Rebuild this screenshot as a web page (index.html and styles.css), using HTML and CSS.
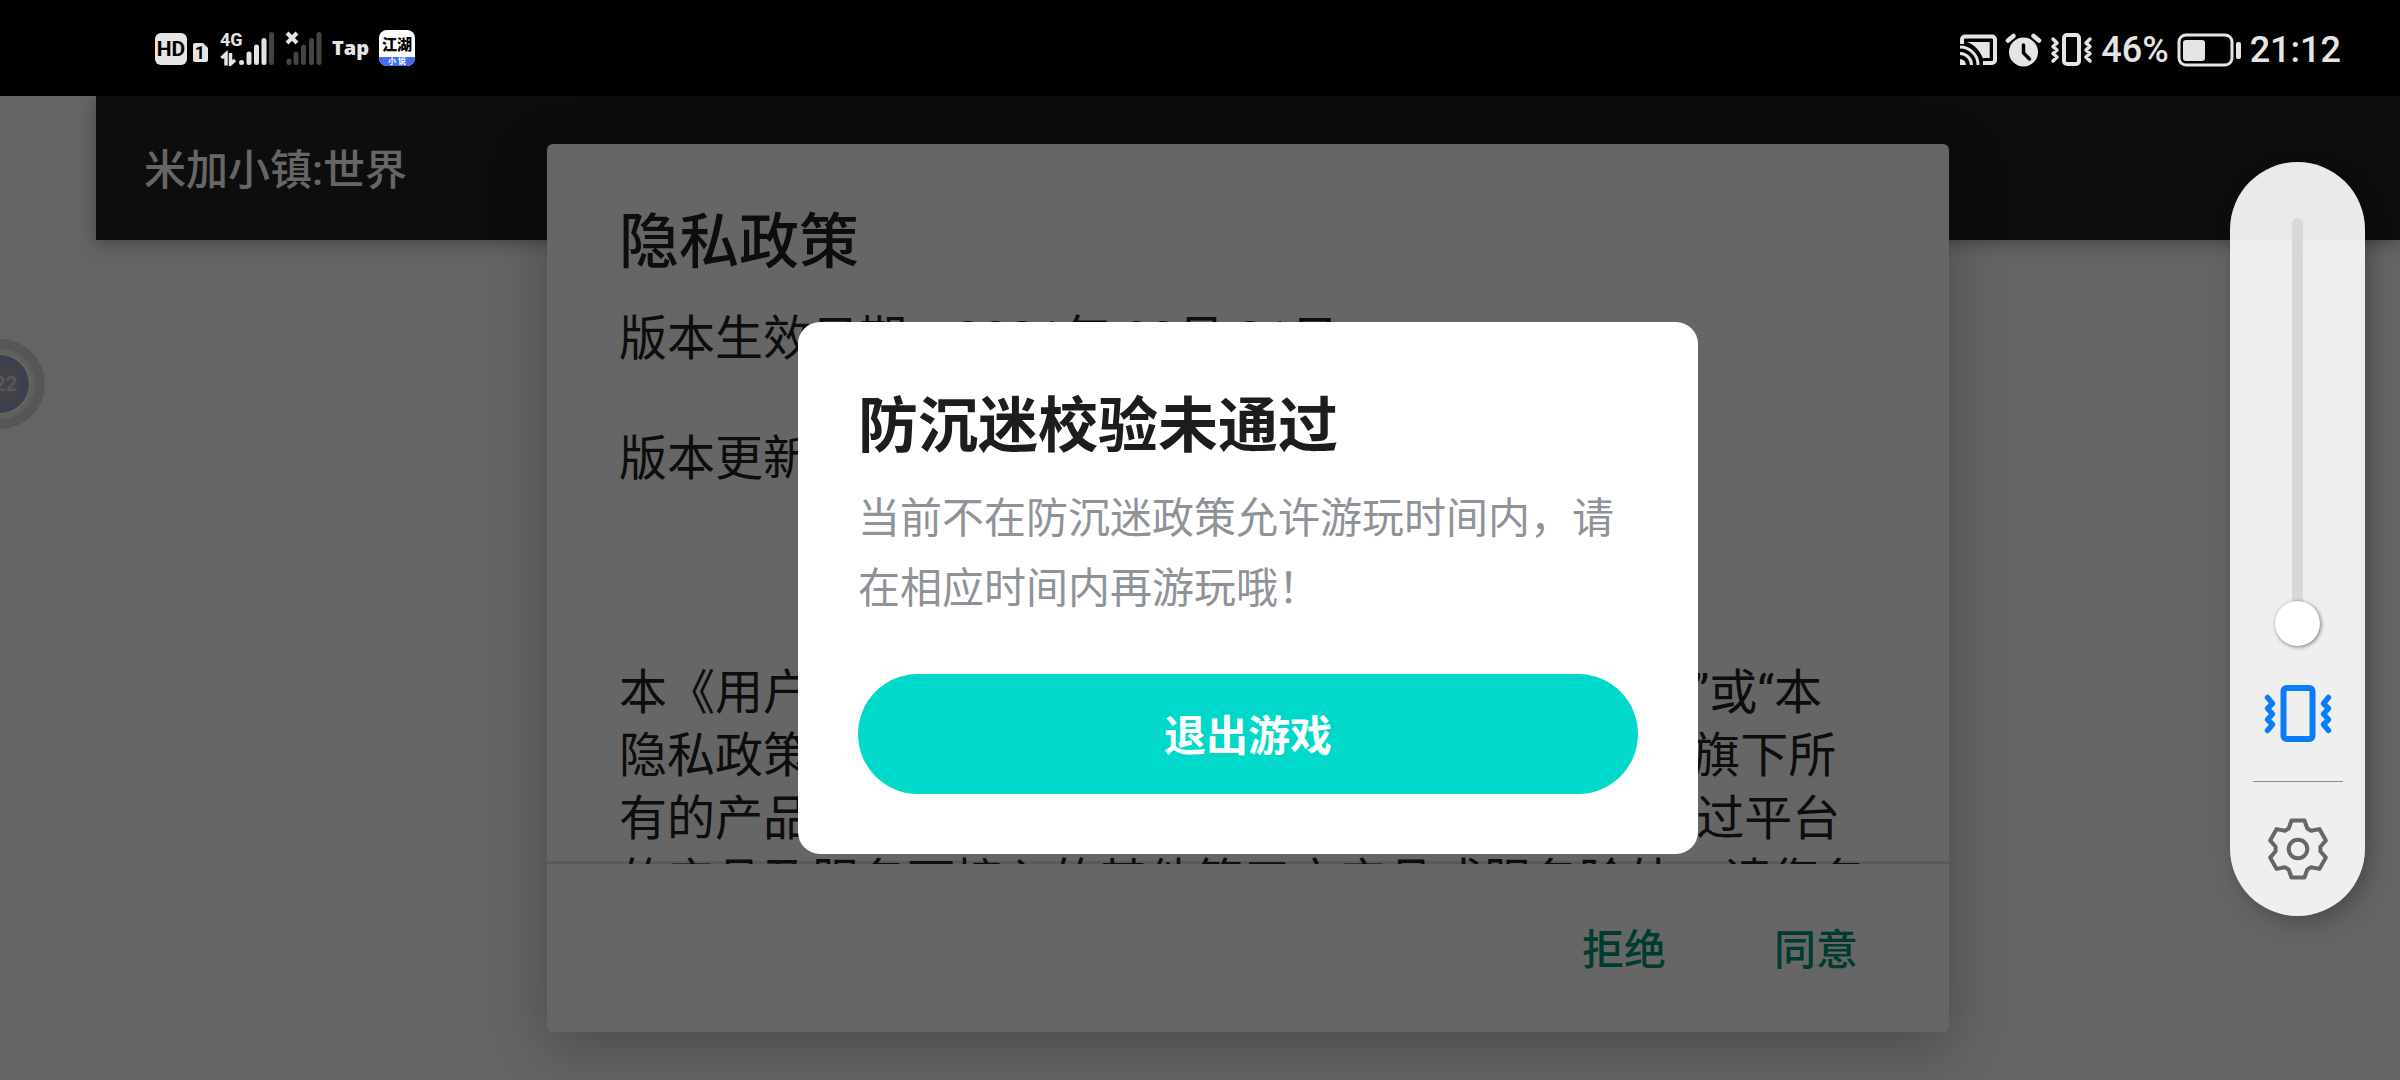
FILE: index.html
```html
<!DOCTYPE html>
<html lang="zh-CN">
<head>
    <meta charset="UTF-8">
    <meta name="viewport" content="width=device-width, initial-scale=1.0">
    <title>米加小镇:世界</title>
    <link rel="stylesheet" href="styles.css">
</head>
<body>

    <!-- 状态栏 -->
    <header class="status-bar">
        <div class="status-group">
            <svg width="53" height="36" viewBox="0 0 53 36">
                <rect x="0" y="3" width="32" height="32" rx="6" fill="#e5e5e5"/>
                <text class="hd-text" x="16" y="26" text-anchor="middle">HD</text>
                <path d="M40 13h8l5 5v12a2 2 0 0 1-2 2H40a2 2 0 0 1-2-2V15a2 2 0 0 1 2-2z" fill="#e5e5e5"/>
                <text class="sim-text" x="45" y="29" text-anchor="middle">1</text>
            </svg>
            <svg width="57" height="36" viewBox="-2 0 57 36">
                <text class="net-text" x="0" y="16">4G</text>
                <path d="M1.500 28L6 24V35.500M10.500 23v11L15 30" fill="none" stroke="#e5e5e5" stroke-width="3.500"/>
                <g stroke="#e5e5e5" stroke-width="5" stroke-linecap="round">
                    <path d="M21.500 32.500v.1M29 24v8.500M36.500 17v15.500M44 10.500v22"/>
                    <path d="M51.500 4.500v28" stroke="#444"/>
                </g>
            </svg>
            <svg width="37" height="36" viewBox="0 0 37 36">
                <path d="M2 3l10 10M12 3L2 13" stroke="#e5e5e5" stroke-width="4"/>
                <path d="M4 31v1.500M11 24v8.500M18.500 17v15.500M26.500 10.500v22M34 4.500v28" stroke="#444" stroke-width="5" stroke-linecap="round"/>
            </svg>
            <span class="tap">Tap</span>
            <svg width="36" height="36" viewBox="0 0 36 36">
                <rect width="36" height="36" rx="8" fill="#fff"/>
                <path d="M0 27h36v1a8 8 0 0 1-8 8H8a8 8 0 0 1-8-8z" fill="#3f6ff0"/>
                <text class="app-name" x="18" y="20" text-anchor="middle">江湖</text>
                <text class="app-kind" x="18" y="34" text-anchor="middle">小 说</text>
            </svg>
        </div>
        <div class="status-group status-right">
            <svg width="38" height="34" viewBox="0 0 38 34">
                <path d="M3 11V6.500a3 3 0 0 1 3-3h27a3 3 0 0 1 3 3V27a3 3 0 0 1-3 3h-9" fill="none" stroke="#e5e5e5" stroke-width="4"/>
                <path d="M8 9h22.700v16h-7C21 18 16 12 8 9z" fill="#e5e5e5"/>
                <path d="M1 26a6 6 0 0 1 6 6H1z" fill="#e5e5e5"/>
                <path d="M1 20.500A11.500 11.500 0 0 1 12.500 32M1 14a18 18 0 0 1 18 18" fill="none" stroke="#e5e5e5" stroke-width="3"/>
            </svg>
            <svg width="37" height="34" viewBox="0 0 37 34">
                <circle cx="18.500" cy="19" r="14.500" fill="#e5e5e5"/>
                <path d="M3 7.500L8.500 3M34 7.500L28.500 3" stroke="#e5e5e5" stroke-width="4.500" stroke-linecap="round"/>
                <path d="M18.500 12v8l6 6" fill="none" stroke="#000" stroke-width="3.500" stroke-linecap="round" stroke-linejoin="round"/>
            </svg>
            <svg width="43" height="34" viewBox="0 0 43 34">
                <rect x="14" y="2" width="15" height="29" rx="3" fill="none" stroke="#e5e5e5" stroke-width="4"/>
                <path d="M3 6l4 4-4 3.500 4 3.500-4 3.500 4 3.500-4 4M40 6l-4 4 4 3.500-4 3.500 4 3.500-4 3.500 4 4" fill="none" stroke="#e5e5e5" stroke-width="3.500" stroke-linecap="round" stroke-linejoin="round"/>
            </svg>
            <span class="status-text">46%</span>
            <svg width="65" height="34" viewBox="1 0 65 34">
                <rect x="3" y="2" width="53" height="30" rx="7" fill="none" stroke="#e5e5e5" stroke-width="3"/>
                <rect x="7" y="7" width="22" height="21" rx="3" fill="#e5e5e5"/>
                <rect x="60" y="9" width="5" height="17" rx="2" fill="#e5e5e5"/>
            </svg>
            <span class="status-text">21:12</span>
        </div>
    </header>

    <main class="screen">
        <div class="app-bar">
            <h1>米加小镇:世界</h1>
        </div>

        <!-- 悬浮球 -->
        <button class="float-ball" type="button" aria-label="悬浮球">
            <svg width="90" height="90" viewBox="0 0 90 90">
                <circle cx="45" cy="45" r="45" fill="#d8d8d8"/>
                <circle cx="45" cy="45" r="35" fill="#fff"/>
                <circle cx="45" cy="45" r="33" fill="none" stroke="#ececec" stroke-width="4"/>
                <circle cx="45" cy="45" r="29" fill="#8ea6c0"/>
                <circle cx="45" cy="45" r="20" fill="#a4a9b2"/>
                <text class="ball-text" x="62" y="52" text-anchor="end">22</text>
            </svg>
        </button>

        <!-- 隐私政策 -->
        <div class="layer">
            <section class="policy">
                <h2>隐私政策</h2>
                <div class="policy-body">
                    <p>版本生效日期：2021年 03月 31日</p>
                    <p class="gap"></p>
                    <p>版本更新日期：2021年 03月 31日</p>
                    <p class="gap"></p>
                    <p class="gap"></p>
                    <p class="gap"></p>
                    <p>本《用户协议与隐私政策》以下均简称为“隐私政策”或“本<br>
                    隐私政策”）适用于本公司及其全部关联公司提供的旗下所<br>
                    有的产品及服务, （包括但不限于网站、客户端和通过平台<br>
                    的产品及服务可接入的其他第三方产品或服务除外。请您务</p>
                </div>
                <div class="policy-actions">
                    <button type="button">拒绝</button>
                    <button type="button">同意</button>
                </div>
            </section>
        </div>

        <!-- 防沉迷提示 -->
        <div class="layer dim">
            <section class="notice" role="dialog" aria-labelledby="noticeTitle">
                <h2 id="noticeTitle">防沉迷校验未通过</h2>
                <p>当前不在防沉迷政策允许游玩时间内，请在相应时间内再游玩哦！</p>
                <button type="button">退出游戏</button>
            </section>
        </div>
    </main>

    <!-- 音量面板 -->
    <aside class="volume">
        <input class="volume-slider" type="range" min="0" max="100" value="0" aria-label="音量">
        <button class="icon-button" type="button" aria-label="振动">
            <svg width="70" height="62" viewBox="0 0 70 62">
                <g fill="none" stroke="#0a7cf6" stroke-linecap="round" stroke-linejoin="round">
                    <rect x="20.500" y="5" width="29" height="51" rx="3" stroke-width="6"/>
                    <path d="M4.500 14.500l5 6-5 5 5 5.500-5 5.500 5 5-5 6M65.500 14.500l-5 6 5 5-5 5.500 5 5.500-5 5 5 6" stroke-width="5.500"/>
                </g>
            </svg>
        </button>
        <hr>
        <button class="icon-button" type="button" aria-label="设置">
            <svg width="62" height="62" viewBox="-31 -31 62 62">
                <g fill="none" stroke="#666" stroke-width="4" stroke-linejoin="round">
                    <path d="M-6.500-28.500H6.500L9.300-20.500 13.100-18.300 21.400-19.900 27.900-8.600 22.400-2.200V2.200L27.900 8.600 21.400 19.900 13.100 18.300 9.300 20.500 6.500 28.500H-6.500L-9.300 20.500-13.100 18.300-21.400 19.900-27.900 8.600-22.400 2.200V-2.200L-27.900-8.600-21.400-19.900-13.100-18.300-9.300-20.500z"/>
                    <circle r="9.300"/>
                </g>
            </svg>
        </button>
    </aside>

</body>
</html>
```
FILE: styles.css
```css
* {
    box-sizing: border-box;
}

body {
    margin: 0;
    height: 100vh;
    display: flex;
    flex-direction: column;
    overflow: hidden;
    background-color: #fafafa;
    font-family: Roboto, "Noto Sans CJK SC", sans-serif;
}

h1, h2, p {
    margin: 0;
}

svg {
    display: block;
    flex: none;
}

button {
    padding: 0;
    border: none;
    background: none;
    font-family: inherit;
    cursor: pointer;
}

/* 状态栏 */
.status-bar {
    flex: none;
    height: 96px;
    padding: 0 59px 0 155px;
    display: flex;
    justify-content: space-between;
    align-items: center;
    background-color: #000;
    color: #e5e5e5;
}

.status-group {
    display: flex;
    align-items: center;
    gap: 10px;
}

.status-right {
    gap: 8px;
    padding-top: 3px;
}

.status-text {
    font-size: 36px;
    font-weight: 500;
    line-height: 40px;
}

.tap {
    font-family: "Open Sans", sans-serif;
    font-size: 20px;
    font-weight: 800;
    line-height: 28px;
}

.hd-text {
    font-size: 21px;
    font-weight: 700;
}

.sim-text {
    font-size: 18px;
    font-weight: 700;
}

.net-text {
    font-size: 18px;
    font-weight: 700;
    fill: #e5e5e5;
}

.app-name {
    font-size: 15px;
    font-weight: 900;
}

.app-kind {
    font-size: 8px;
    font-weight: 700;
    fill: #fff;
}

/* 应用页面 */
.screen {
    flex: 1;
    position: relative;
    overflow: hidden;
}

.app-bar {
    height: 144px;
    margin-left: 96px;
    padding: 0 48px 4px;
    display: flex;
    align-items: center;
    background-color: #212121;
    box-shadow: 0 4px 16px rgba(0, 0, 0, 0.3);
}

.app-bar h1 {
    font-size: 42px;
    font-weight: 500;
    color: #fff;
}

.float-ball {
    position: absolute;
    left: -45px;
    top: 243px;
}

.ball-text {
    font-size: 20px;
    font-weight: 700;
    fill: #d8dade;
}

.layer {
    position: absolute;
    inset: 0;
    padding: 48px 0 48px 96px;
    display: flex;
    justify-content: center;
    align-items: center;
}

.dim {
    background-color: rgba(0, 0, 0, 0.6);
}

/* 隐私政策弹窗 */
.policy {
    width: 1402px;
    max-width: 90%;
    height: 100%;
    display: flex;
    flex-direction: column;
    background-color: #fff;
    border-radius: 6px;
    box-shadow: 0 16px 60px rgba(0, 0, 0, 0.25);
    color: #212121;
}

.policy h2 {
    padding: 63px 72px 0;
    font-size: 60px;
    font-weight: 500;
    line-height: 72px;
}

.policy-body {
    flex: 1;
    min-height: 0;
    padding: 28px 72px 0;
    overflow: hidden;
    white-space: nowrap;
    font-size: 48px;
    line-height: 63px;
    box-shadow: inset 0 -3px #e0e0e0;
}

.policy-body .gap {
    height: 57px;
}

.policy-actions {
    flex: none;
    height: 168px;
    padding: 0 67px 4px;
    display: flex;
    justify-content: flex-end;
    align-items: center;
    gap: 60px;
}

.policy-actions button {
    padding: 24px;
    font-size: 42px;
    font-weight: 500;
    color: #009479;
}

/* 防沉迷弹窗 */
.notice {
    width: 900px;
    max-width: 90%;
    padding: 63px 60px 60px;
    display: flex;
    flex-direction: column;
    background-color: #fff;
    border-radius: 22px;
}

.notice h2 {
    font-size: 60px;
    font-weight: 700;
    line-height: 84px;
    color: #1c1d1f;
}

.notice p {
    margin: 15px 0 50px;
    font-size: 42px;
    line-height: 70px;
    color: #8f9398;
}

.notice button {
    height: 120px;
    padding-bottom: 4px;
    border-radius: 60px;
    background-color: #00d9c9;
    font-size: 42px;
    font-weight: 700;
    color: #fff;
}

/* 音量面板 */
.volume {
    position: fixed;
    right: 35px;
    top: 162px;
    width: 135px;
    padding: 56px 0 36px;
    display: flex;
    flex-direction: column;
    align-items: center;
    border-radius: 68px;
    background-color: rgba(247, 247, 247, 0.95);
    box-shadow: 6px 6px 20px rgba(0, 0, 0, 0.25);
}

.volume-slider {
    appearance: none;
    width: 45px;
    height: 428px;
    margin: 0 0 37px;
    background: none;
    writing-mode: vertical-lr;
    direction: rtl;
}

.volume-slider::-webkit-slider-runnable-track {
    width: 11px;
    border-radius: 6px;
    background-color: #d8d8d8;
}

.volume-slider::-webkit-slider-thumb {
    appearance: none;
    width: 45px;
    height: 45px;
    margin-left: -17px;
    border-radius: 50%;
    background-color: #fff;
    box-shadow: 1px 1px 4px rgba(0, 0, 0, 0.5);
}

.volume hr {
    width: 90px;
    height: 1px;
    margin: 36px 0;
    border: none;
    background-color: #8c8c8c;
}
```
